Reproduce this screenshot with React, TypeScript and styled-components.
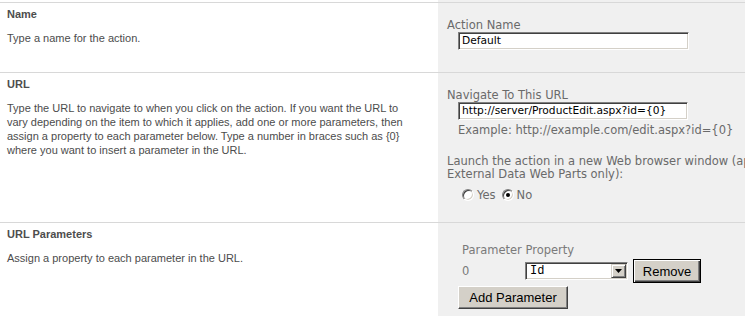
import React from "react";
import styled, { createGlobalStyle } from "styled-components";

const Global = createGlobalStyle`
  html, body { margin: 0; padding: 0; overflow: hidden; background: #fff; }
  * { box-sizing: border-box; }
`;

const Form = styled.div`
  display: flex;
  flex-direction: column;
  min-height: 100vh;
  padding-top: 2px;
  background: linear-gradient(to right, #ffffff 438px, #f0f0f0 438px);
`;

const Section = styled.div<{ $grow?: boolean }>`
  display: flex;
  border-top: 1px solid #d8d8d8;
  flex: ${(p) => (p.$grow ? "1" : "none")};
`;

const LeftCell = styled.div`
  width: 438px;
  flex: none;
  padding: 4px 8px 0 7px;
  font-family: "Liberation Sans", Arial, sans-serif;
  font-size: 11px;
  line-height: 14px;
  color: #4c4c4c;
`;

const Heading = styled.div`
  font-weight: bold;
  color: #4d4d4d;
`;

const Description = styled.div`
  margin-top: 10px;
`;

const RightCell = styled.div<{ $top: number; $bottom: number }>`
  flex: 1;
  min-width: 0;
  overflow: hidden;
  padding: ${(p) => p.$top}px 0 ${(p) => p.$bottom}px 9px;
  font-family: "DejaVu Sans", Verdana, sans-serif;
  font-size: 11.5px;
  line-height: 14px;
  color: #6a6a6a;
`;

const Label = styled.div`
  white-space: nowrap;
`;

const TextBox = styled.div<{ $width: number }>`
  width: ${(p) => p.$width}px;
  height: 18px;
  margin: 0 0 0 11px;
  background: #fff;
  border-top: 1px solid #808080;
  border-left: 1px solid #808080;
  border-right: 1px solid #ffffff;
  border-bottom: 1px solid #ffffff;
  box-shadow: inset 1px 1px 0 #404040, inset -1px -1px 0 #d4d0c8;
  padding: 1px 0 0 3px;
  font-family: "DejaVu Sans", Verdana, sans-serif;
  font-size: 10.67px;
  line-height: 14px;
  color: #000;
  white-space: nowrap;
  overflow: hidden;
`;

const Example = styled.div`
  margin: 3px 0 0 11px;
  white-space: nowrap;
`;

const LaunchText = styled.div`
  margin-top: 18px;
  line-height: 13px;
  white-space: nowrap;
`;

const RadioRow = styled.div`
  display: flex;
  align-items: center;
  margin: 7px 0 0 15px;
  height: 14px;
`;

const RadioCircle = styled.span<{ $checked?: boolean }>`
  position: relative;
  display: inline-block;
  width: 12px;
  height: 12px;
  border-radius: 50%;
  background: #fff;
  border: 1px solid;
  border-color: #808080 #ffffff #ffffff #808080;
  box-shadow: inset 1px 1px 0 #404040, inset -1px -1px 0 #d4d0c8;
  &::after {
    content: "";
    display: ${(p) => (p.$checked ? "block" : "none")};
    position: absolute;
    left: 3px;
    top: 3px;
    width: 4px;
    height: 4px;
    border-radius: 50%;
    background: #000;
  }
`;

const RadioLabel = styled.span`
  margin: 0 6px 0 3px;
  color: #6a6a6a;
`;

const ParamGrid = styled.div`
  display: grid;
  grid-template-columns: 63px auto auto;
  align-items: center;
  justify-content: start;
  margin: 0 0 0 15px;
  color: #7a7a7a;
`;

const ParamHeader = styled.div`
  grid-column: 1 / span 3;
  margin-bottom: 2px;
  white-space: nowrap;
`;

const Select = styled.div`
  display: flex;
  width: 103px;
  height: 18px;
  background: #fff;
  border-top: 1px solid #808080;
  border-left: 1px solid #808080;
  border-right: 1px solid #ffffff;
  border-bottom: 1px solid #ffffff;
  box-shadow: inset 1px 1px 0 #404040, inset -1px -1px 0 #d4d0c8;
  padding: 1px;
`;

const SelectValue = styled.span`
  flex: 1;
  padding-left: 3px;
  font-family: "Liberation Mono", "Courier New", monospace;
  font-size: 12px;
  line-height: 15px;
  color: #000;
`;

const ArrowButton = styled.span`
  width: 15px;
  height: 14px;
  display: flex;
  align-items: center;
  justify-content: center;
  background: #d4d0c8;
  border-top: 1px solid #d4d0c8;
  border-left: 1px solid #d4d0c8;
  border-right: 1px solid #404040;
  border-bottom: 1px solid #404040;
  box-shadow: inset 1px 1px 0 #ffffff, inset -1px -1px 0 #808080;
`;

const Button = styled.button<{ $default?: boolean; $width: number; $height: number }>`
  width: ${(p) => p.$width}px;
  height: ${(p) => p.$height}px;
  padding: 0;
  margin: 0;
  background: #d4d0c8;
  font-family: "Liberation Sans", Arial, sans-serif;
  font-size: 13px;
  color: #000;
  border: 1px solid;
  border-color: ${(p) => (p.$default ? "#000" : "#ffffff #404040 #404040 #ffffff")};
  box-shadow: ${(p) =>
    p.$default
      ? "inset 1px 1px 0 #ffffff, inset -1px -1px 0 #404040, inset -2px -2px 0 #808080"
      : "inset -1px -1px 0 #808080"};
  cursor: default;
`;

const RemoveButton = styled(Button)`
  margin-left: 5px;
`;

const AddRow = styled.div`
  margin: 3px 0 0 11px;
`;

const App: React.FC = () => (
  <>
    <Global />
    <Form>
      <Section>
        <LeftCell>
          <Heading>Name</Heading>
          <Description>Type a name for the action.</Description>
        </LeftCell>
        <RightCell $top={15} $bottom={22}>
          <Label>Action Name</Label>
          <TextBox $width={231}>Default</TextBox>
        </RightCell>
      </Section>
      <Section>
        <LeftCell>
          <Heading>URL</Heading>
          <Description>
            Type the URL to navigate to when you click on the action. If you want the URL to
            <br />
            vary depending on the item to which it applies, add one or more parameters, then
            <br />
            assign a property to each parameter below. Type a number in braces such as {"{0}"}
            <br />
            where you want to insert a parameter in the URL.
          </Description>
        </LeftCell>
        <RightCell $top={15} $bottom={20}>
          <Label>Navigate To This URL</Label>
          <TextBox $width={230}>http://server/ProductEdit.aspx?id={"{0}"}</TextBox>
          <Example>Example: http://example.com/edit.aspx?id={"{0}"}</Example>
          <LaunchText>
            Launch the action in a new Web browser window (applies to
            <br />
            External Data Web Parts only):
          </LaunchText>
          <RadioRow>
            <RadioCircle />
            <RadioLabel>Yes</RadioLabel>
            <RadioCircle $checked />
            <RadioLabel>No</RadioLabel>
          </RadioRow>
        </RightCell>
      </Section>
      <Section $grow>
        <LeftCell>
          <Heading>URL Parameters</Heading>
          <Description>Assign a property to each parameter in the URL.</Description>
        </LeftCell>
        <RightCell $top={20} $bottom={0}>
          <ParamGrid>
            <ParamHeader>Parameter Property</ParamHeader>
            <span>0</span>
            <Select>
              <SelectValue>Id</SelectValue>
              <ArrowButton>
                <svg width="7" height="4" viewBox="0 0 7 4">
                  <path d="M0 0H7L3.5 4Z" fill="#000" />
                </svg>
              </ArrowButton>
            </Select>
            <RemoveButton $default $width={68} $height={24}>
              Remove
            </RemoveButton>
          </ParamGrid>
          <AddRow>
            <Button $width={110} $height={23}>
              Add Parameter
            </Button>
          </AddRow>
        </RightCell>
      </Section>
    </Form>
  </>
);

export default App;
